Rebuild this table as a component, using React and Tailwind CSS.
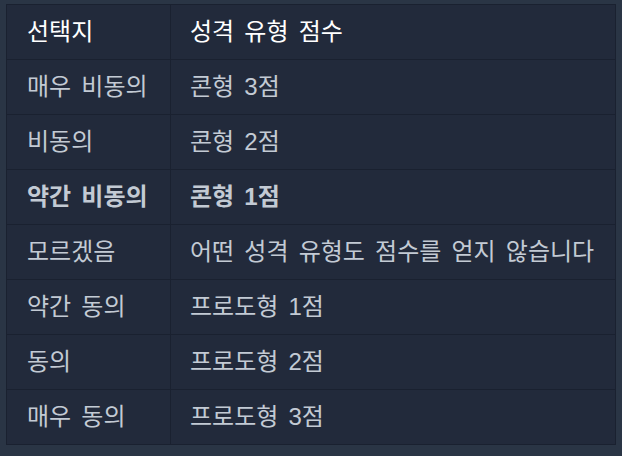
export default function App() {
  const rows = [
    ["매우 비동의", "콘형 3점", false],
    ["비동의", "콘형 2점", false],
    ["약간 비동의", "콘형 1점", true],
    ["모르겠음", "어떤 성격 유형도 점수를 얻지 않습니다", false],
    ["약간 동의", "프로도형 1점", false],
    ["동의", "프로도형 2점", false],
    ["매우 동의", "프로도형 3점", false],
  ];
  return (
    <div
      className="w-[622px] h-[456px] bg-[#2a3545] pt-[4px] pl-[6px]"
      style={{ fontFamily: '"Liberation Sans", "Noto Sans CJK KR", sans-serif' }}
    >
      <table className="w-[610px] table-fixed border-collapse bg-[#222a3b] border border-[#1a2130] text-[24px] leading-none [word-spacing:3.5px]">
        <thead>
          <tr className="h-[55px]">
            <th className="w-[164px] text-left font-normal text-white pl-[20px] border border-[#1a2130]">선택지</th>
            <th className="text-left font-normal text-white pl-[19px] border border-[#1a2130]">성격 유형 점수</th>
          </tr>
        </thead>
        <tbody>
          {rows.map(([a, b, bold], i) => (
            <tr key={i} className="h-[55px]">
              <td className={`pl-[20px] whitespace-nowrap border border-[#1a2130] text-[#c3cad4] ${bold ? "font-bold" : ""}`}>{a}</td>
              <td className={`pl-[19px] whitespace-nowrap border border-[#1a2130] text-[#c3cad4] ${bold ? "font-bold" : ""}`}>{b}</td>
            </tr>
          ))}
        </tbody>
      </table>
    </div>
  );
}
